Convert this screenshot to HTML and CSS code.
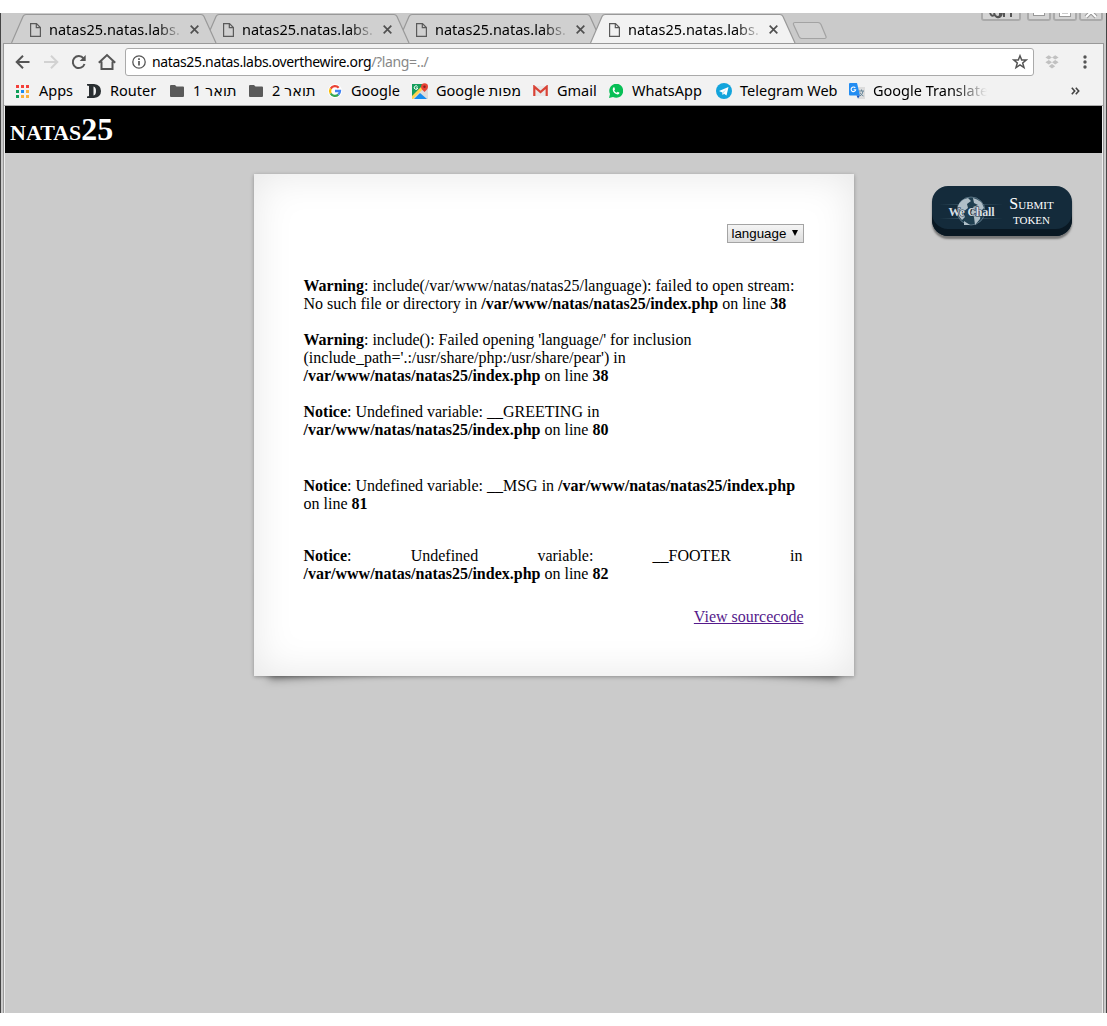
FILE: index.html
```html
<!DOCTYPE html>
<html lang="en">
<head>
<meta charset="utf-8">
<title>natas25</title>
<link rel="stylesheet" href="styles.css">
</head>
<body>
<svg class="defs" width="0" height="0">
  <defs>
    <symbol id="page" viewBox="0 0 11 14"><path d="M.6.6H6.5L10.4 4.5V13.4H.6ZM6.3.8V4.7H10.2" fill="none" stroke="#5a5a5a" stroke-width="1.2"/></symbol>
    <symbol id="close" viewBox="0 0 8 8"><path d="M.6.6 7.4 7.4M7.4.6.6 7.4" stroke="#505050" stroke-width="1.5"/></symbol>
    <symbol id="tab" viewBox="0 0 206 31"><path d="M.5 30 12 3.5Q13 1.5 15 1.5H190Q192 1.5 193 3.5L205 30" stroke="#999" stroke-width="1.2"/></symbol>
    <symbol id="folder" viewBox="0 0 14 12"><path d="M1 0H5L6.5 1.5H13Q14 1.5 14 2.5V11Q14 12 13 12H1Q0 12 0 11V1Q0 0 1 0Z" fill="#5a5a5a"/></symbol>
  </defs>
</svg>
<div class="window">
  <header class="tabstrip">
    <div class="tab first"><svg class="tab-shape"><use href="#tab"/></svg><svg class="page-icon"><use href="#page"/></svg><span class="tab-title">natas25.natas.labs.</span><svg class="close-icon"><use href="#close"/></svg></div>
    <div class="tab second"><svg class="tab-shape"><use href="#tab"/></svg><svg class="page-icon"><use href="#page"/></svg><span class="tab-title">natas25.natas.labs.</span><svg class="close-icon"><use href="#close"/></svg></div>
    <div class="tab"><svg class="tab-shape"><use href="#tab"/></svg><svg class="page-icon"><use href="#page"/></svg><span class="tab-title">natas25.natas.labs.</span><svg class="close-icon"><use href="#close"/></svg></div>
    <div class="tab active"><svg class="tab-shape"><use href="#tab"/></svg><svg class="page-icon"><use href="#page"/></svg><span class="tab-title">natas25.natas.labs.</span><svg class="close-icon"><use href="#close"/></svg></div>
    <svg class="new-tab" width="36" height="19" viewBox="0 0 36 19"><path d="M3 1.5H26Q28 1.5 29 3.5L34 15.5Q34.500 17.500 32.500 17.500H9.500Q8 17.500 7 15.500L1.500 3.500Q1 1.500 3 1.500Z" fill="#d0d0d0" stroke="#a3a3a3" stroke-width="1.200"/></svg>
    <div class="controls">
      <span class="control user"><svg width="38" height="8"><path d="M8 0Q10 5 13 1M12 0Q14 6 18 3V0M15 4Q19 5 20 0M22 0V4M29 0V4" fill="none" stroke="#555" stroke-width="2"/></svg></span>
      <span class="control"><svg width="22" height="8"><rect x="5.500" y="-4" width="11" height="6.500" fill="#fff" stroke="#999"/></svg></span>
      <span class="control"><svg width="22" height="8"><rect x="5.500" y="-5" width="11" height="8.500" fill="#fff" stroke="#999"/><path d="M8 0H14" stroke="#999"/></svg></span>
      <span class="control"><svg width="22" height="8"><path d="M6 4 11-1 16 4" fill="none" stroke="#999" stroke-width="4"/><path d="M6 4 11-1 16 4" fill="none" stroke="#fff" stroke-width="2"/></svg></span>
    </div>
  </header>
  <div class="chrome">
    <nav class="toolbar">
      <svg class="nav-icons" width="104" height="20" viewBox="0 0 104 20" fill="none" stroke="#555" stroke-width="2">
        <path d="M15.500 10H3M9 3.700 2.700 10 9 16.300"/>
        <path d="M30 10H43M37 3.700 43.300 10 37 16.300" stroke="#d2d2d2"/>
        <path d="M69.500 6.300A6 6 0 1 0 70.500 12"/><path d="M71.700 3V9H65.700Z" fill="#555" stroke="none"/>
        <path d="M87.500 9.500V17H98.500V9.500M84.800 10.700 93 3 101.200 10.700"/>
      </svg>
      <div class="omnibox">
        <svg width="14" height="14" viewBox="0 0 14 14"><circle cx="7" cy="7" r="6.200" fill="none" stroke="#555" stroke-width="1.300"/><path d="M7 6V10.500M7 3.300V4.900" stroke="#555" stroke-width="1.700"/></svg>
        <span class="url">natas25.natas.labs.overthewire.org<span class="path">/?lang=../</span></span>
        <svg class="star" width="16" height="16" viewBox="0 0 16 16"><path d="M8 1.800 9.700 6H14.200L10.700 8.900 12 13.600 8 10.900 4 13.600 5.300 8.900 1.800 6H6.300Z" fill="none" stroke="#555" stroke-width="1.500"/></svg>
      </div>
      <svg class="dropbox" width="14" height="14" viewBox="0 0 14 14" fill="#c1c1c1"><path d="M3.800.2 7 2.400 3.800 4.600.4 2.400ZM10.200.2 13.600 2.400 10.200 4.600 7 2.400ZM3.800 5 7 7.200 3.800 9.400.4 7.200ZM10.200 5 13.600 7.200 10.200 9.400 7 7.200ZM7 9 10.200 11.200 7 13.600 3.800 11.200Z"/></svg>
      <svg class="menu" width="4" height="14" viewBox="0 0 4 14" fill="#555"><circle cx="2" cy="2" r="1.700"/><circle cx="2" cy="7" r="1.700"/><circle cx="2" cy="12" r="1.700"/></svg>
    </nav>
    <nav class="bookmarks">
      <a class="bm apps"><svg width="14" height="14"><g fill="#f43f3a"><path d="M1 1h3v3H1zM6 1h3v3H6zM11 1h3v3H11z"/></g><path fill="#0f9d58" d="M1 6h3v3H1zM1 11h3v3H1z"/><path fill="#1a8cf0" d="M6 6h3v3H6z"/><path fill="#fbb03b" d="M11 6h3v3H11zM6 11h3v3H6zM11 11h3v3H11z"/></svg><span>Apps</span></a>
      <a class="bm router"><svg width="16" height="14" viewBox="0 0 16 14"><path fill-rule="evenodd" d="M1 0H8Q15 1 15 7T8 14H1V12.500L3 12V2L1 1.500ZM7.500 2.500V11.500Q10 11 10 7T7.500 2.500Z" fill="#292e31"/></svg><span>Router</span></a>
      <a class="bm folder"><svg width="14" height="12"><use href="#folder"/></svg><span dir="rtl">תואר 1</span></a>
      <a class="bm folder"><svg width="14" height="12"><use href="#folder"/></svg><span dir="rtl">תואר 2</span></a>
      <a class="bm google"><svg width="14" height="14" viewBox="0 0 14 14"><circle cx="7" cy="7" r="7" fill="#fff"/><g fill="none" stroke-width="2.300"><path d="M10.700 3.700A5 5 0 0 0 2.700 4.600" stroke="#ea4335"/><path d="M2.700 4.600A5 5 0 0 0 2.700 9.500" stroke="#fbbc05"/><path d="M2.700 9.500A5 5 0 0 0 10.300 10.600" stroke="#34a853"/><path d="M10.300 10.600Q12 9 12 7H7" stroke="#4285f4"/></g></svg><span>Google</span></a>
      <a class="bm maps"><svg width="16" height="16" viewBox="0 0 16 16"><path d="M0 1H16V16H0Z" fill="#dcdcdc"/><path d="M0 1H13L0 14Z" fill="#159f5c"/><path d="M0 13 11 2 13 4 1 16H0Z" fill="#ffd34f"/><path d="M2 16 8 10 15 16Z" fill="#168df0"/><path d="M12.500 9Q9 6 9 3.800A3.500 3.500 0 0 1 16 3.800Q16 6 12.500 9Z" fill="#e84335"/><circle cx="12.500" cy="3.700" r="1.200" fill="#84231d"/><path d="M5.500 3.500A1.800 1.800 0 1 0 5.800 5H4" fill="none" stroke="#fff"/></svg><span>Google מפות</span></a>
      <a class="bm gmail"><svg width="15" height="12" viewBox="0 0 15 12"><path d="M1 1H14V11H1Z" fill="#e8e8e8"/><path d="M1.300 11V1.700L7.500 7 13.700 1.700V11" fill="none" stroke="#d94336" stroke-width="2.200"/></svg><span>Gmail</span></a>
      <a class="bm whatsapp"><svg width="14" height="14" viewBox="0 0 14 14"><path d="M0 14 1 10A7 7 0 1 1 4 13Z" fill="#08bf56"/><path d="M4 4Q4.500 3 5.500 3.500L6 5.500 5.200 6.400Q6 8 7.800 8.700L8.700 7.800 10.500 8.700Q10.500 10.500 8.500 10.500Q4 9.500 3.700 5.500Z" fill="#fff"/></svg><span>WhatsApp</span></a>
      <a class="bm telegram"><svg width="16" height="16" viewBox="0 0 16 16"><circle cx="8" cy="8" r="8" fill="#13a4dc"/><path d="M3 8 12.500 4 10.500 12.500 8 10.700 6.700 12 6.300 9.500Z" fill="#fff"/><path d="M6.300 9.500 10.500 6 7.500 10.200 6.700 12Z" fill="#b7dded"/></svg><span>Telegram Web</span></a>
      <a class="bm translate"><svg width="16" height="16" viewBox="0 0 16 16"><path d="M6 4H16V16H9Z" fill="#dcdcdc"/><path d="M1 0H8L11 12.500H1Q0 12.500 0 11.500V1Q0 0 1 0Z" fill="#238df2"/><path d="M7.500 12.500H11L9 15.500Z" fill="#1357c5"/><path d="M6.300 5A2.300 2.300 0 1 0 6.700 6.700H4.600" fill="none" stroke="#fff" stroke-width="1.100"/><path d="M10 8H15M12.500 6.500V8M11 13Q14 11 14 8M11 9.500Q12 12 14.500 13" fill="none" stroke="#66869a"/></svg><span>Google Translate</span></a>
      <svg class="more" width="9" height="8" viewBox="0 0 9 8"><path d="M.8.800 3.700 4 .800 7.200M4.800.800 7.700 4 4.800 7.200" fill="none" stroke="#444" stroke-width="1.600"/></svg>
    </nav>
    <main class="viewport">
      <h1>natas25</h1>
      <div class="body">
        <section class="sheet">
          <div class="language"><span class="select">language <i></i></span></div>
          <p><b>Warning</b>: include(/var/www/natas/natas25/language): failed to open stream: No such file or directory in <b>/var/www/natas/natas25/index.php</b> on line <b>38</b></p>
          <p><b>Warning</b>: include(): Failed opening 'language/' for inclusion (include_path='.:/usr/share/php:/usr/share/pear') in <b>/var/www/natas/natas25/index.php</b> on line <b>38</b></p>
          <p class="greeting"><b>Notice</b>: Undefined variable: __GREETING in <b>/var/www/natas/natas25/index.php</b> on line <b>80</b></p>
          <p class="message"><b>Notice</b>: Undefined variable: __MSG in <b>/var/www/natas/natas25/index.php</b> on line <b>81</b></p>
          <p class="footer"><b>Notice</b>: Undefined variable: __FOOTER in <b>/var/www/natas/natas25/index.php</b> on line <b>82</b></p>
          <div class="source"><a href="#">View sourcecode</a></div>
        </section>
        <a class="wechall">
          <svg width="64" height="34" viewBox="0 0 64 34">
            <defs><linearGradient id="beam"><stop offset="0" stop-color="#5e8293" stop-opacity="0"/><stop offset=".5" stop-color="#5e8293"/><stop offset="1" stop-color="#5e8293" stop-opacity="0"/></linearGradient></defs>
            <path d="M0 10H64V11H0ZM0 24H64V25H0Z" fill="url(#beam)" opacity=".6"/>
            <circle cx="32" cy="17" r="14" fill="#203f50" stroke="#71899a" stroke-width=".7"/>
            <path d="M19 12Q22 5 29 4L32 7 28 10 29 14 24 18 26 23 23 26Q17 20 19 12ZM34 4Q43 6 45 14L42 17 41 25 36 31 35 23 32 19 34 13 39 11 35 9ZM25 27 31 31H25Z" fill="#b0bfc8"/>
            <text x="32.500" y="22" text-anchor="middle" textLength="46">We Chall</text>
          </svg>
          <span>Submit token</span>
        </a>
      </div>
    </main>
  </div>
</div>
</body>
</html>
```
FILE: styles.css
```css
* { box-sizing: border-box; }
body { margin: 0; padding: 13px 0; background: #fff; font-family: "Liberation Serif", serif; }
.defs { position: absolute; }
.window { height: 1000px; background: #cacaca; border-left: 1px solid #444; border-right: 1px solid #444; overflow: hidden; }
.tabstrip { height: 30px; display: flex; padding-left: 10px; }
.tab { position: relative; z-index: 0; width: 193px; height: 31px; display: flex; align-items: center; padding: 2px 0 0 19px; flex: none; }
.tab-shape { position: absolute; z-index: -1; left: 0; top: 0; width: 206px; height: 31px; fill: #d0d0d0; }
.first { z-index: 2; }
.second { z-index: 1; }
.active { z-index: 3; }
.active .tab-shape { fill: #f2f2f2; }
.page-icon { width: 11px; height: 14px; }
.tab-title { width: 133px; margin: -1px 0 0 8px; overflow: hidden; white-space: nowrap; font: 14.5px "Noto Sans", sans-serif; -webkit-mask: linear-gradient(90deg, #000 108px, transparent 134px); mask: linear-gradient(90deg, #000 108px, transparent 134px); }
.close-icon { width: 9px; height: 9px; margin-left: 8px; }
.new-tab { margin: 8px 0 0 9px; flex: none; }
.controls { margin-left: auto; display: flex; gap: 2px; padding-right: 3px; }
.control { width: 24px; height: 8px; border: 2px solid #aaa; border-top: 0; border-radius: 0 0 3px 3px; background: #d4d4d4; overflow: hidden; }
.control svg { display: block; margin-left: -1px; }
.user { width: 40px; margin-right: 4px; }
.chrome { height: 970px; margin: 0 2px; border: 1px solid #999; border-bottom: 0; background: #f2f2f2; }
.toolbar { height: 36px; display: flex; align-items: center; padding-left: 10px; }
.nav-icons { flex: none; margin-right: 7px; }
.omnibox { width: 909px; height: 28px; display: flex; align-items: center; padding: 0 5px 0 6px; border: 1px solid #aaa; border-radius: 3px; background: #fff; }
.url { margin: -1px 0 0 6px; font: 14px "Noto Sans", sans-serif; white-space: nowrap; letter-spacing: -.35px; }
.path { color: #888; }
.star { margin-left: auto; }
.dropbox { margin-left: 11px; }
.menu { margin-left: 24px; }
.bookmarks { height: 26px; display: flex; padding: 0 0 5px 11px; align-items: center; border-bottom: 1px solid #aaa; }
.bm { display: flex; align-items: center; flex: none; white-space: nowrap; height: 20px; font: 14.5px "Noto Sans", "DejaVu Sans", sans-serif; }
.bm svg { flex: none; margin: 2px 9px 0 0; }
.bm.apps { width: 71px; }
.apps svg { margin-right: 10px; }
.router { width: 84px; }
.bm.router svg { margin-right: 8px; }
.folder { width: 79px; }
.google { width: 84px; }
.maps { width: 121px; }
.bm.maps svg, .bm.telegram svg, .bm.translate svg { margin-right: 8px; }
.gmail { width: 76px; }
.whatsapp { width: 107px; }
.telegram { width: 133px; }
.translate { width: 138px; overflow: hidden; -webkit-mask: linear-gradient(90deg, #000 104px, transparent 138px); mask: linear-gradient(90deg, #000 104px, transparent 138px); }
.more { margin: 2px 0 0 84px; }
.viewport { height: 907px; margin: 0 1px; background: #cbcbcb; box-shadow: 0 0 0 1px #eee; clip-path: inset(0 -1px); }
h1 { margin: 0; height: 47px; padding: 5px; background: #000; color: #fff; font-size: 32px; line-height: 37px; font-variant: small-caps; }
.body { display: grid; grid-template-columns: 600px 140px; column-gap: 78px; padding: 21px 0 0 249px; align-items: start; position: relative; z-index: 0; }
.sheet { position: relative; height: 502px; padding: 50px 50.500px 50px 49.500px; background: #fff; font-size: 16px; line-height: 18px; box-shadow: 0 1px 4px rgba(0,0,0,.3), 0 0 40px rgba(0,0,0,.1) inset; }
.sheet::before, .sheet::after { content: ""; position: absolute; z-index: -1; bottom: 12px; width: 200px; height: 100px; box-shadow: 0 8px 10px rgba(0,0,0,.5); }
.sheet::before { left: 11px; transform: rotate(-4deg); }
.sheet::after { right: 11px; transform: rotate(4deg); }
.language { display: flex; justify-content: flex-end; height: 53px; }
.select { display: flex; align-items: center; justify-content: space-between; width: 77px; height: 19px; padding: 0 5px 0 4px; border: 1px solid #a4a4a4; background: linear-gradient(#f5f5f5, #ddd); font: 13.33px "Liberation Sans", sans-serif; }
.select i { border: 3.5px solid transparent; border-top: 6px solid #000; border-bottom: 0; margin-bottom: 1px; }
.sheet p { margin: 0 0 18px; }
.sheet .greeting { margin-bottom: 38px; }
.sheet .message { margin-bottom: 34px; }
.sheet .footer { margin: 0 1px 25px 0; text-align: justify; }
.source { text-align: right; }
.source a { color: #551a8b; }
.wechall { display: flex; align-items: center; width: 140px; height: 50px; margin-top: 12px; padding: 3px 12px 3px 7px; border-radius: 16px; background: #142b3b; color: #fff; box-shadow: inset 0 -7px #091823, 0 3px 2px #777; }
.wechall svg { flex: none; }
.wechall text { font: bold 12px "Liberation Serif", serif; fill: #d6dfe4; stroke: #142b3b; stroke-width: 1px; paint-order: stroke; }
.wechall span { flex: 1; font-size: 16px; line-height: 15px; font-variant: small-caps; text-align: center; }
```
